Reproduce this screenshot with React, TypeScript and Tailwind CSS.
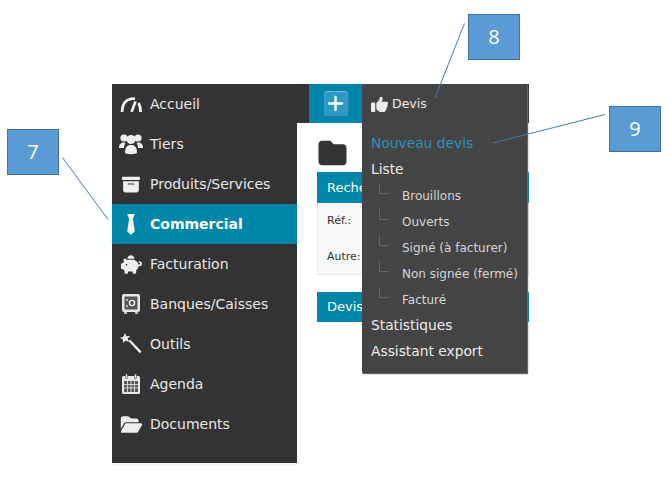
import { FaBoxArchive, FaPiggyBank, FaFolderOpen, FaThumbsUp, FaPlus, FaFolder } from "react-icons/fa6";

const font = "font-['DejaVu_Sans',sans-serif]";

function GaugeIcon() {
  return (
    <svg viewBox="0 0 22 15" className="w-[22px] h-[15px]" fill="none" stroke="#f2f2f2" strokeWidth="2.8">
      <path d="M2 15 C2 8 5 3 11 1.8 C12.5 1.6 13.5 1.6 15 2" />
      <path d="M11.5 15 L15.5 4.5" strokeWidth="2.6" />
      <path d="M18.5 6 C20 8.5 20.6 11.5 20.6 15" />
    </svg>
  );
}

function TiersIcon() {
  return (
    <svg viewBox="0 0 24 22" className="w-[24px] h-[22px]" fill="#f0f0f0">
      <circle cx="5" cy="5" r="3.6" />
      <circle cx="19" cy="5" r="3.6" />
      <circle cx="12" cy="6.5" r="4.6" />
      <path d="M0 15 C0 11 2 9.5 5 9.5 L6.5 9.8 C5.5 11.5 5 13 5 15 Z" />
      <path d="M24 15 C24 11 22 9.5 19 9.5 L17.5 9.8 C18.5 11.5 19 13 19 15 Z" />
      <path d="M6 20 C6 14.5 8 12 12 12 C16 12 18 14.5 18 20 C16 21.5 8 21.5 6 20 Z" />
    </svg>
  );
}

function TieIcon() {
  return (
    <svg viewBox="0 0 10 22" className="w-[10px] h-[21px]" fill="#f5f5f5">
      <path d="M1 0 H9 L7 5 L9 18 L5 22 L1 18 L3 5 Z" />
    </svg>
  );
}

function SafeIcon() {
  return (
    <svg viewBox="0 0 18 20" className="w-[18px] h-[20px]">
      <rect x="0" y="0" width="18" height="18" rx="2" fill="#e8e8e8" />
      <rect x="2.5" y="2.5" width="13" height="13" fill="#555" />
      <circle cx="10" cy="9" r="2.6" fill="none" stroke="#eee" strokeWidth="1.4" />
      <circle cx="5" cy="6" r="0.9" fill="#eee" />
      <circle cx="5" cy="12" r="0.9" fill="#eee" />
      <rect x="2" y="18" width="3" height="2" fill="#bbb" />
      <rect x="13" y="18" width="3" height="2" fill="#bbb" />
    </svg>
  );
}

function WandIcon() {
  return (
    <svg viewBox="0 0 22 22" className="w-[22px] h-[22px]" fill="#f2f2f2">
      <path d="M5 0 L6.3 3.2 L10 3 L7.6 5.8 L9 9 L5.6 7.6 L2.8 10 L3 6.4 L0 4.8 L3.4 3.8 Z" />
      <path d="M8.5 8 L10 6.5 L21.5 18.5 L19.8 20.2 Z" />
    </svg>
  );
}

function CalendarIcon() {
  return (
    <svg viewBox="0 0 18 20" className="w-[18px] h-[20px]">
      <rect x="0" y="2" width="18" height="18" rx="1.5" fill="#e8e8e8" />
      <rect x="3.5" y="0" width="2" height="4.5" fill="#e8e8e8" stroke="#333" strokeWidth="0.5" />
      <rect x="12.5" y="0" width="2" height="4.5" fill="#e8e8e8" stroke="#333" strokeWidth="0.5" />
      <rect x="2" y="7" width="14" height="11" fill="#555" />
      <path d="M2 10.5 H16 M2 14 H16 M5.5 7 V18 M9 7 V18 M12.5 7 V18" stroke="#ddd" strokeWidth="0.9" />
    </svg>
  );
}

const items = [
  { label: "Accueil", icon: <GaugeIcon /> },
  { label: "Tiers", icon: <TiersIcon /> },
  { label: "Produits/Services", icon: <FaBoxArchive className="w-[18px] h-[19px]" /> },
  { label: "Commercial", icon: <TieIcon />, active: true },
  { label: "Facturation", icon: <FaPiggyBank className="w-[21px] h-[19px] -scale-x-100" /> },
  { label: "Banques/Caisses", icon: <SafeIcon /> },
  { label: "Outils", icon: <WandIcon /> },
  { label: "Agenda", icon: <CalendarIcon /> },
  { label: "Documents", icon: <FaFolderOpen className="w-[23px] h-[19px]" /> },
];

const subItems = ["Brouillons", "Ouverts", "Signé (à facturer)", "Non signée (fermé)", "Facturé"];

function Sidebar() {
  return (
    <div className="w-[185px] h-[379px] bg-[#333333] shrink-0 flex flex-col">
      {items.map((it) => (
        <div
          key={it.label}
          className={`h-10 flex items-center text-[14px] ${it.active ? "bg-[#0086a8] text-white font-bold" : "text-[#e8e8e8]"}`}
        >
          <span className="w-[38px] flex justify-center text-[#f0f0f0]">{it.icon}</span>
          <span>{it.label}</span>
        </div>
      ))}
    </div>
  );
}

function SubMenu() {
  return (
    <div className="absolute left-[65px] top-0 w-[165px] h-[289px] bg-[#444444] shadow-[1px_1px_1px_#666] pl-[9px] text-[#ececec]">
      <div className="h-10 flex items-center gap-[4px] text-[12.5px]">
        <FaThumbsUp className="w-[17px] h-[17px] text-[#eee]" />
        <span>Devis</span>
      </div>
      <div className="mt-[6px] h-[26px] flex items-center text-[#2f93bd] text-[13.8px]">Nouveau devis</div>
      <div className="h-[26px] flex items-center text-[13.8px]">Liste</div>
      {subItems.map((s) => (
        <div key={s} className="h-[26px] flex items-center text-[12px] text-[#d6d6d6] relative pl-[31px] translate-y-px">
          <span className="absolute left-[8px] top-0 w-[10px] h-[11px] border-l border-b border-[#666]" />
          {s}
        </div>
      ))}
      <div className="h-[26px] flex items-center text-[13.8px]">Statistiques</div>
      <div className="h-[26px] flex items-center text-[13.8px]">Assistant export</div>
    </div>
  );
}

function Main() {
  return (
    <div className="relative flex-1 flex flex-col">
      <div className="h-[39px] bg-[#333333] flex shrink-0">
        <div className="ml-3 w-[53px] bg-[#0086a8] flex items-center justify-center">
          <div className="w-[26px] h-[27px] rounded-[4px] bg-[#2a9ac4] flex items-center justify-center border border-[#1f7fa5] shadow-[inset_0_1px_1px_#6fc0dd]">
            <FaPlus className="w-[19px] h-[19px] text-white" />
          </div>
        </div>
      </div>
      <div className="flex-1 pl-5 pt-[16px] text-[11px] text-[#333]">
        <FaFolder className="-ml-px w-[33px] h-[28px] text-[#333]" />
        <div className="mt-[5px] h-[31px] bg-[#0086a8] text-white flex items-center pl-[10px] text-[13px]">Recherche</div>
        <div className="h-[72px] bg-[#f8f8f8] border border-[#e6e6e6] border-t-0 pl-[9px] flex flex-col">
          <div className="mt-[10px]">Réf.:</div>
          <div className="mt-[19px]">Autre:</div>
        </div>
        <div className="mt-[17px] h-[30px] bg-[#0086a8] text-white flex items-center pl-[10px] text-[13px]">Devis</div>
      </div>
      <SubMenu />
    </div>
  );
}

function Callout({ n, pos }: { n: string; pos: string }) {
  return (
    <div className={`absolute ${pos} w-[52px] h-[46px] bg-[#5b9bd5] border border-[#41719c] flex items-center justify-center text-white text-[20px] font-['Open_Sans',sans-serif]`}>
      {n}
    </div>
  );
}

export default function App() {
  return (
    <div className={`relative w-[668px] h-[477px] overflow-hidden bg-white ${font}`}>
      <div className="absolute left-[112px] top-[84px] w-[417px] flex">
        <Sidebar />
        <Main />
      </div>
      <div className="absolute left-[112px] top-[463px] w-[185px] h-[3px] bg-[#f4f4f4]" />
      <Callout n="7" pos="left-[7px] top-[129px]" />
      <Callout n="8" pos="left-[468px] top-[14px]" />
      <Callout n="9" pos="left-[609px] top-[106px]" />
      <svg className="absolute left-0 top-0 pointer-events-none" width="668" height="477" fill="none" stroke="#4a7ba7" strokeWidth="1">
        <path d="M62.5 157.5 L108 219.5" />
        <path d="M464.5 23.5 L435 98" />
        <path d="M605 114.5 L493 143" />
      </svg>
    </div>
  );
}
